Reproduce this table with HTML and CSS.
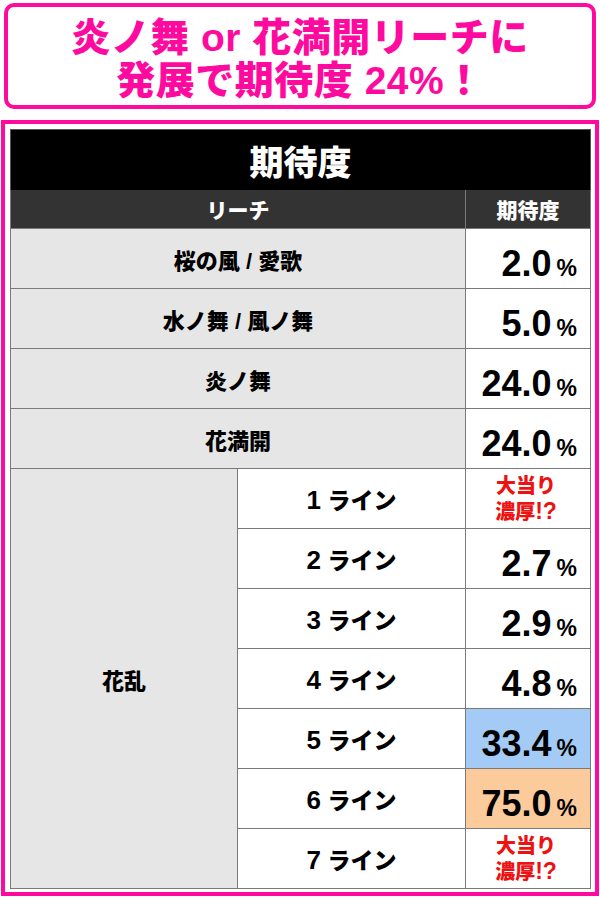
FILE: index.html
```html
<!DOCTYPE html>
<html lang="ja">
<head>
<meta charset="utf-8">
<title>期待度</title>
<link rel="stylesheet" href="styles.css">
</head>
<body>
<div class="banner">
  <p>炎ノ舞 or 花満開リーチに</p>
  <p>発展で期待度 24%！</p>
</div>
<div class="frame">
  <div class="chart-title">期待度</div>
  <div class="grid">
    <div class="hd span2">リーチ</div>
    <div class="hd">期待度</div>

    <div class="lbl span2">桜の風 / 愛歌</div>
    <div class="val"><span class="num">2.0</span><span class="pct">%</span></div>

    <div class="lbl span2">水ノ舞 / 風ノ舞</div>
    <div class="val"><span class="num">5.0</span><span class="pct">%</span></div>

    <div class="lbl span2">炎ノ舞</div>
    <div class="val"><span class="num">24.0</span><span class="pct">%</span></div>

    <div class="lbl span2">花満開</div>
    <div class="val"><span class="num">24.0</span><span class="pct">%</span></div>

    <div class="lbl group">花乱</div>
    <div class="sub"><span><span class="dig">1</span> ライン</span></div>
    <div class="val hot">大当り<br>濃厚<span class="ex">!?</span></div>

    <div class="sub"><span><span class="dig">2</span> ライン</span></div>
    <div class="val"><span class="num">2.7</span><span class="pct">%</span></div>

    <div class="sub"><span><span class="dig">3</span> ライン</span></div>
    <div class="val"><span class="num">2.9</span><span class="pct">%</span></div>

    <div class="sub"><span><span class="dig">4</span> ライン</span></div>
    <div class="val"><span class="num">4.8</span><span class="pct">%</span></div>

    <div class="sub"><span><span class="dig">5</span> ライン</span></div>
    <div class="val blue"><span class="num">33.4</span><span class="pct">%</span></div>

    <div class="sub"><span><span class="dig">6</span> ライン</span></div>
    <div class="val orange"><span class="num">75.0</span><span class="pct">%</span></div>

    <div class="sub"><span><span class="dig">7</span> ライン</span></div>
    <div class="val hot">大当り<br>濃厚<span class="ex">!?</span></div>
  </div>
</div>
</body>
</html>
```
FILE: styles.css
```css
* { box-sizing: border-box; }
html, body { margin: 0; padding: 0; background: #fff; }
body {
  width: 600px;
  height: 900px;
  overflow: hidden;
  font-family: "Liberation Sans", "Noto Sans CJK JP", sans-serif;
  color: #000;
}

.banner {
  margin: 3px 4px 0 4px;
  height: 106px;
  border: 4px solid #ff0a9e;
  border-radius: 10px;
  padding-top: 9px;
  text-align: center;
  color: #ff0a9e;
}
.banner p {
  margin: 0;
  font-size: 39px;
  line-height: 43px;
  font-weight: 900;
  letter-spacing: 0.5px;
}

.frame {
  margin: 11px 1px 0 1px;
  border: 4px solid #ff0a9e;
  padding: 5px 4px 3px 5px;
}

.chart-title {
  height: 61px;
  background: #000;
  color: #fff;
  font-size: 34px;
  font-weight: 900;
  display: flex;
  align-items: center;
  justify-content: center;
  border: 1px solid #555;
  border-bottom: none;
}

.grid {
  display: grid;
  grid-template-columns: 226px 227px 1fr;
  grid-template-rows: 38px;
  grid-auto-rows: 59px;
  gap: 1px;
  padding: 0 1px 1px 1px;
  background: #7a7a7a;
}

.span2 { grid-column: span 2; }

.hd {
  background: #333;
  color: #fff;
  font-size: 21px;
  font-weight: 900;
  display: flex;
  align-items: center;
  justify-content: center;
}

.lbl {
  background: #e6e6e6;
  font-size: 22px;
  font-weight: 900;
  display: flex;
  align-items: center;
  justify-content: center;
}
.group { grid-row: span 7; }

.sub {
  background: #fff;
  font-size: 23px;
  font-weight: 900;
  display: flex;
  align-items: center;
  justify-content: center;
  white-space: pre;
}
.dig {
  font-size: 26px;
  font-weight: 700;
}

.val {
  background: #fff;
  text-align: right;
  padding: 11px 13px 0 0;
  line-height: 48px;
  white-space: nowrap;
}
.num {
  font-size: 36px;
  font-weight: 700;
  letter-spacing: 0;
}
.pct {
  font-size: 23px;
  font-weight: 700;
  margin-left: 5px;
}
.blue { background: #a3cbf6; }
.orange { background: #fccb9c; }

.hot {
  color: #ee1111;
  text-align: center;
  padding: 5px 4px 0 0;
  font-size: 20px;
  line-height: 25px;
  font-weight: 900;
}
.ex {
  font-size: 23px;
  font-weight: 700;
}
```
